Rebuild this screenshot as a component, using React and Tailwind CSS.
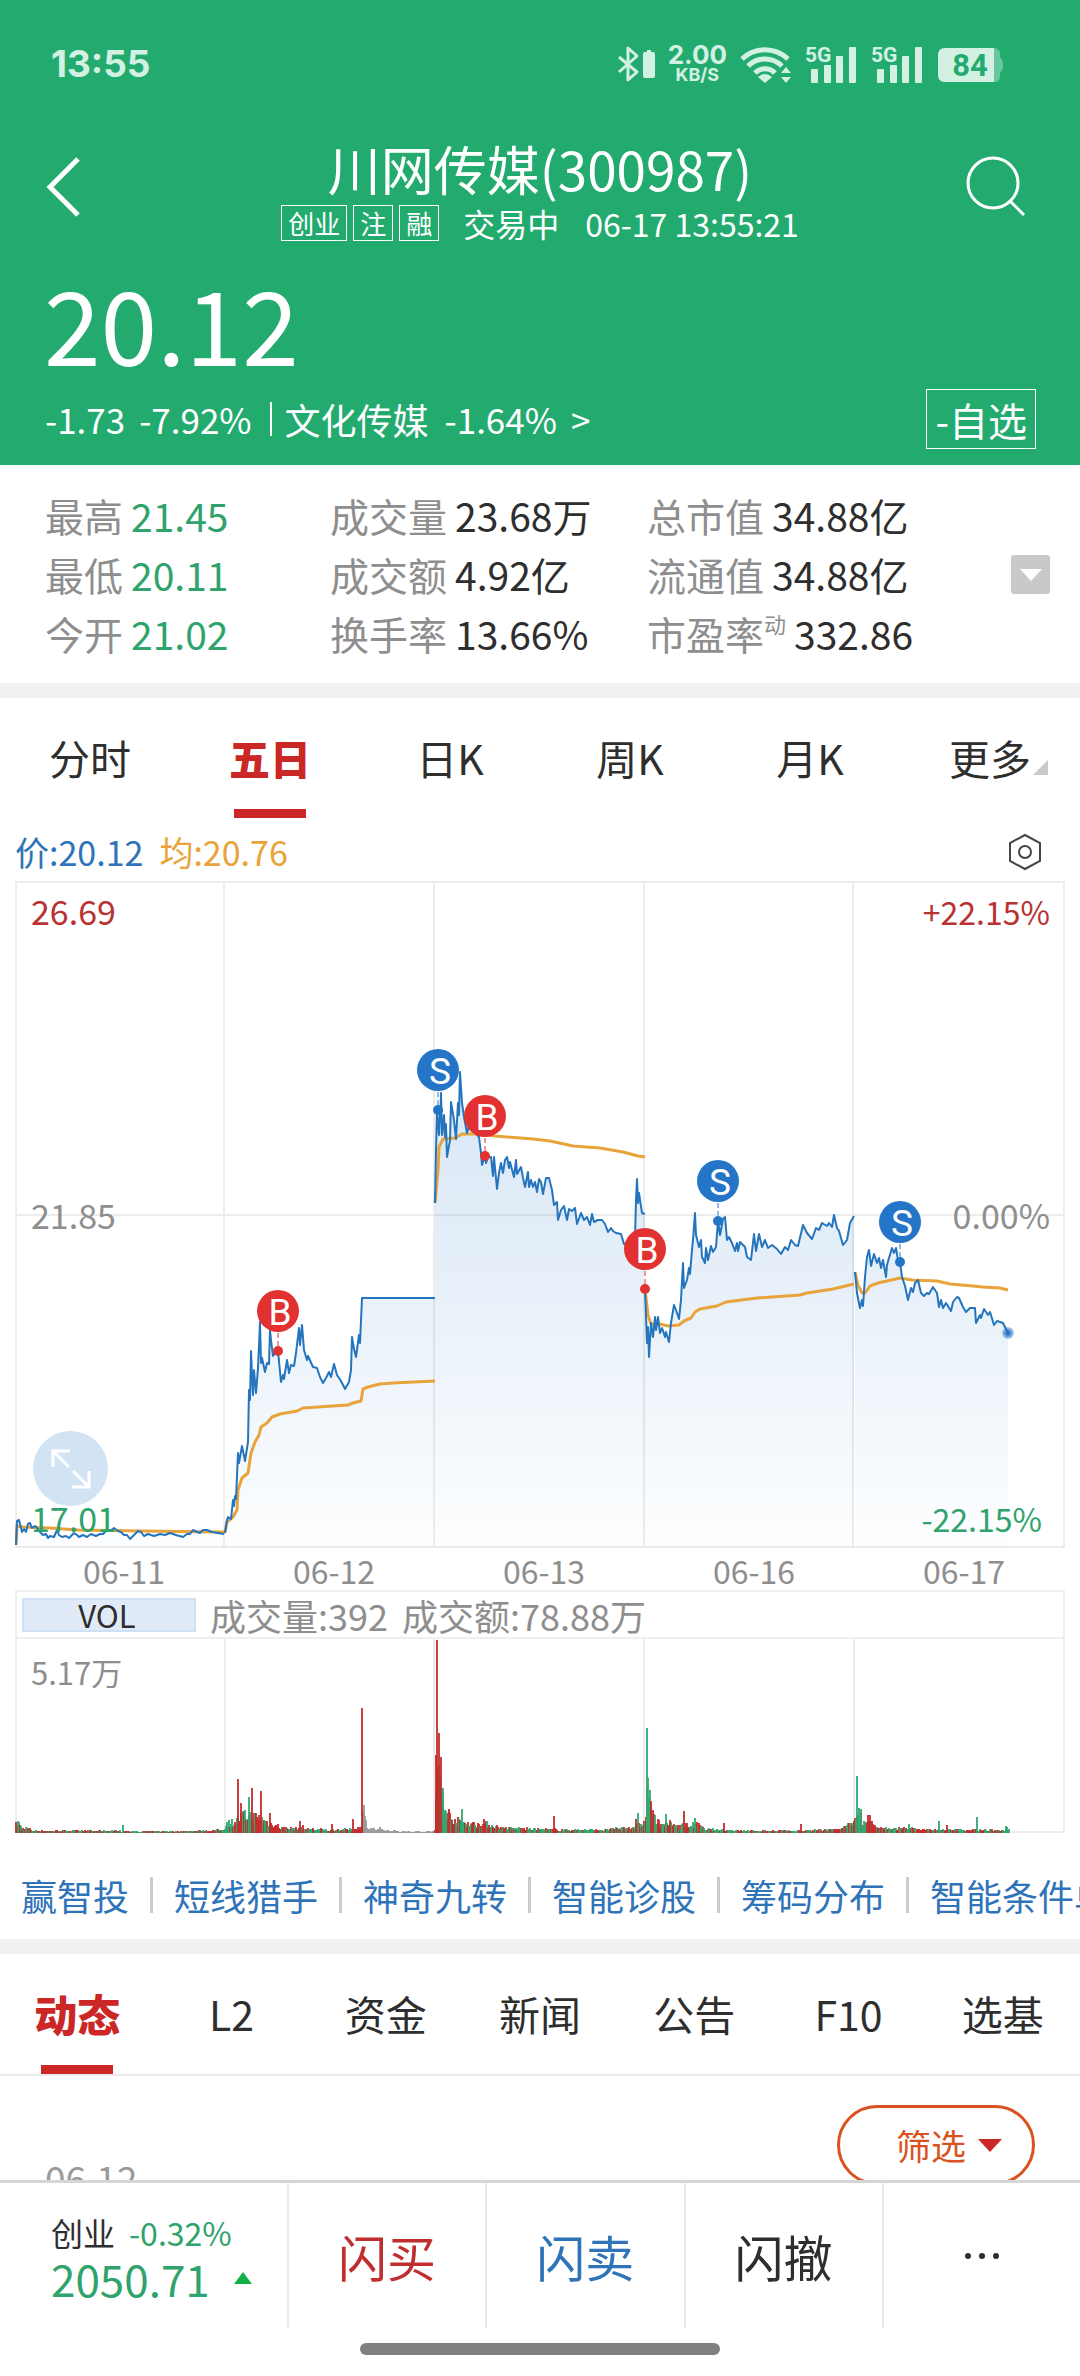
import React from "react";

const stats = [
  [
    { label: "最高", value: "21.45", green: true },
    { label: "最低", value: "20.11", green: true },
    { label: "今开", value: "21.02", green: true },
  ],
  [
    { label: "成交量", value: "23.68万" },
    { label: "成交额", value: "4.92亿" },
    { label: "换手率", value: "13.66%" },
  ],
  [
    { label: "总市值", value: "34.88亿" },
    { label: "流通值", value: "34.88亿" },
    { label: "市盈率", sup: "动", value: "332.86" },
  ],
];

const periods = ["分时", "五日", "日K", "周K", "月K", "更多"];
const dates = ["06-11", "06-12", "06-13", "06-16", "06-17"];
const tools = ["赢智投", "短线猎手", "神奇九转", "智能诊股", "筹码分布", "智能条件单"];
const sections = ["动态", "L2", "资金", "新闻", "公告", "F10", "选基"];

// one entry per trading day, x,y pairs in chart units
const days = [
  {
    price:
      "16,1545 17,1521 19,1520 20,1524 22,1532 24,1529 26,1532 28,1524 30,1523 32,1528 35,1526 38,1529 40,1532 43,1535 46,1534 48,1538 50,1536 54,1537 57,1530 59,1535 62,1537 66,1536 69,1538 72,1535 74,1533 77,1535 79,1537 83,1535 87,1537 91,1534 96,1536 100,1534 103,1534 107,1530 110,1531 114,1528 118,1531 121,1532 124,1535 127,1535 130,1539 134,1535 138,1531 141,1532 144,1536 148,1534 154,1536 160,1534 165,1535 170,1533 176,1535 183,1537 187,1534 190,1534 193,1530 197,1532 200,1533 203,1530 207,1530 212,1532 218,1533 224,1534",
    avg: "16,1545 17,1526 23,1527 50,1528 78,1530 140,1531 225,1532",
  },
  {
    price:
      "225,1533 227,1520 228,1517 231,1519 233,1500 234,1506 235,1496 236,1499 238,1453 239,1463 242,1446 245,1461 248,1442 249,1390 250,1400 251,1351 252,1376 253,1395 254,1370 256,1393 258,1368 260,1322 261,1363 262,1358 265,1372 267,1363 269,1364 270,1330 271,1340 273,1356 276,1352 278,1351 281,1382 283,1375 284,1379 287,1360 289,1373 291,1365 294,1366 296,1353 299,1328 300,1345 302,1325 304,1350 307,1360 308,1356 313,1367 317,1368 320,1377 323,1383 326,1378 329,1372 331,1377 334,1364 337,1375 341,1381 345,1389 349,1382 351,1370 352,1337 354,1349 356,1357 359,1335 360,1343 362,1298 435,1298",
    avg: "225,1532 227,1522 233,1517 237,1510 238,1490 242,1478 248,1473 251,1453 255,1442 259,1435 261,1427 267,1423 272,1417 280,1414 297,1411 303,1408 348,1405 353,1403 361,1401 363,1389 368,1387 380,1384 393,1383 435,1381",
  },
  {
    price:
      "435,1203 436,1150 437,1110 439,1135 441,1093 442,1135 444,1115 445,1137 446,1124 447,1157 450,1140 451,1102 454,1120 456,1139 458,1103 459,1115 460,1072 462,1103 464,1117 467,1133 470,1123 473,1130 479,1137 481,1153 482,1165 485,1156 486,1163 488,1157 491,1157 493,1176 494,1157 497,1189 499,1173 501,1163 503,1173 505,1160 507,1157 509,1168 510,1162 514,1177 516,1160 517,1174 521,1167 523,1178 525,1187 528,1172 529,1187 531,1180 533,1187 535,1182 537,1192 539,1179 541,1182 543,1194 546,1178 549,1178 552,1190 554,1205 557,1202 558,1220 561,1210 564,1206 567,1220 569,1209 572,1211 575,1208 577,1224 581,1213 584,1220 587,1217 590,1225 592,1214 594,1222 598,1220 602,1220 605,1224 608,1232 611,1228 613,1231 616,1233 621,1234 624,1244 630,1248 635,1240 636,1200 637,1179 638,1203 639,1193 642,1213 645,1214",
    avg: "435,1203 438,1170 439,1147 443,1139 455,1138 462,1134 480,1134 495,1136 533,1139 550,1141 573,1146 600,1148 623,1152 638,1156 645,1157",
  },
  {
    price:
      "645,1289 647,1343 648,1327 649,1357 651,1323 653,1337 655,1317 656,1330 658,1317 660,1333 662,1328 665,1337 666,1332 669,1342 671,1323 674,1305 676,1310 679,1319 681,1300 683,1263 684,1288 687,1280 689,1268 690,1274 692,1250 693,1240 695,1213 696,1235 699,1247 701,1240 702,1257 705,1263 706,1248 708,1260 711,1246 713,1252 716,1247 718,1221 720,1235 723,1219 725,1217 727,1240 729,1237 732,1243 735,1251 737,1243 738,1251 740,1242 745,1247 747,1257 751,1260 754,1234 756,1251 759,1234 762,1247 765,1240 768,1248 772,1245 777,1249 781,1254 785,1247 788,1250 791,1240 795,1245 798,1246 803,1225 807,1233 812,1239 816,1228 819,1230 822,1223 827,1226 829,1223 832,1227 834,1215 837,1228 839,1231 843,1245 847,1240 850,1223 854,1216",
    avg: "645,1289 648,1315 651,1324 660,1324 668,1326 679,1325 684,1321 691,1318 695,1312 700,1309 717,1306 726,1302 757,1298 800,1295 807,1293 833,1289 854,1284",
  },
  {
    price:
      "855,1272 857,1293 860,1308 862,1300 863,1306 865,1277 867,1257 869,1250 871,1266 874,1254 877,1263 879,1258 881,1268 883,1260 886,1277 887,1265 889,1258 892,1248 894,1253 896,1248 898,1260 900,1262 902,1277 905,1286 908,1300 911,1288 913,1292 915,1283 918,1280 921,1293 924,1296 927,1293 929,1294 933,1287 937,1293 939,1307 941,1300 943,1308 946,1303 951,1311 953,1302 957,1297 959,1298 963,1307 966,1312 970,1308 975,1308 976,1323 980,1315 981,1318 984,1309 988,1315 990,1312 994,1325 997,1321 1003,1323 1008,1333",
    avg: "855,1272 858,1285 862,1293 865,1293 870,1286 878,1283 900,1278 912,1280 937,1281 950,1284 973,1286 983,1287 1000,1288 1008,1290",
  },
];

const trades = [
  { type: "B", x: 278, y: 1351 },
  { type: "S", x: 438, y: 1110 },
  { type: "B", x: 485, y: 1156 },
  { type: "B", x: 645, y: 1289 },
  { type: "S", x: 718, y: 1221 },
  { type: "S", x: 900, y: 1262 },
];

// [x, typical height] of the minute volume, interpolated between entries
const volumeShape = [
  [15, 12], [17, 16], [21, 6], [26, 7], [32, 3], [60, 3], [116, 3], [130, 2], [200, 3], [222, 4],
  [226, 14], [234, 16], [242, 24], [256, 22], [262, 18], [272, 12], [282, 7], [300, 6], [330, 4],
  [350, 5], [360, 8], [362, 26], [368, 6], [382, 4], [400, 2], [430, 2], [434, 3], [436, 90],
  [440, 62], [443, 34], [450, 22], [458, 16], [474, 12], [486, 12], [500, 7], [540, 5], [600, 4],
  [632, 8], [644, 14], [646, 50], [650, 28], [656, 15], [676, 10], [696, 12], [704, 5], [740, 3],
  [800, 3], [840, 5], [852, 14], [857, 26], [864, 15], [870, 14], [876, 6], [910, 6], [930, 4],
  [980, 4], [1004, 4], [1009, 5],
];

const spikes = [
  [237, 54, "r"], [240, 30, "r"], [248, 36, "g"], [251, 45, "r"], [260, 42, "r"], [269, 20, "r"],
  [299, 12, "r"], [302, 8, "r"], [331, 9, "r"], [122, 8, "g"], [352, 14, "r"], [361, 125, "r"],
  [363, 28, "n"], [379, 6, "n"], [436, 193, "r"], [438, 100, "r"], [440, 76, "r"], [435, 78, "r"],
  [442, 45, "g"], [448, 24, "r"], [461, 24, "g"], [483, 14, "r"], [553, 17, "r"], [637, 20, "g"],
  [635, 14, "r"], [646, 105, "g"], [647, 55, "g"], [649, 43, "g"], [650, 32, "r"], [665, 19, "g"],
  [669, 13, "r"], [683, 22, "r"], [694, 15, "g"], [723, 10, "r"], [800, 9, "r"], [856, 57, "g"],
  [858, 25, "g"], [860, 24, "g"], [867, 18, "r"], [869, 18, "r"], [908, 9, "g"], [938, 12, "g"],
  [946, 8, "r"], [976, 16, "g"], [1005, 7, "g"], [1006, 6, "g"],
];

const barColors = { r: "#c42b2b", g: "#2fa870", n: "#9a9a9a" };

const buildVolume = () => {
  const bars = [];
  let seed = 7;
  const random = () => {
    seed = (seed * 16807) % 2147483647;
    return seed / 2147483647;
  };
  let color = "r";
  let step = 0;
  for (let x = 15; x <= 1008; x++) {
    while (volumeShape[step + 1][0] < x) step++;
    const [x0, h0] = volumeShape[step];
    const [x1, h1] = volumeShape[step + 1];
    const top = h0 + ((h1 - h0) * (x - x0)) / (x1 - x0);
    if (random() > 0.55) color = color === "r" ? "g" : "r";
    const paused = x > 363 && x < 434;
    bars.push([x, Math.max(1, Math.round(top * (0.4 + 0.6 * random()))), paused ? "n" : color]);
  }
  return bars.concat(spikes);
};

const volume = buildVolume();

const Signal = () => (
  <svg viewBox="0 0 53 40" className="h-10 w-[53px]" fill="currentColor">
    <text x="0" y="18" fontSize="21" fontWeight="700" fontFamily="Roboto, sans-serif">
      5G
    </text>
    <rect x="6" y="25" width="7" height="14" rx="1" />
    <rect x="19" y="21" width="7" height="18" rx="1" />
    <rect x="31" y="12" width="7" height="27" rx="1" />
    <rect x="44" y="3" width="7" height="36" rx="1" />
  </svg>
);

const StatusBar = () => (
  <div className="flex h-[127px] items-center justify-between pl-[51px] pr-[76px] text-[#d3f1e3]">
    <span className="font-['Inter','Noto_Sans_CJK_SC',sans-serif] text-[37px] font-bold">13:55</span>
    <div className="flex items-center gap-[13px]">
      <svg viewBox="0 0 38 40" className="h-10 w-[38px]" fill="none" stroke="currentColor" strokeWidth="3">
        <path d="M2 13 20 28 11 36V4l9 8L2 28" strokeLinejoin="round" />
        <path d="M28 8h2V6h4v2h2q2 0 2 2v22q0 2-2 2h-8q-2 0-2-2V10q0-2 2-2Z" fill="currentColor" stroke="none" />
      </svg>
      <div className="flex flex-col items-center font-['Inter',sans-serif] font-bold">
        <span className="text-[26px] leading-[22px]">2.00</span>
        <span className="text-[18px] leading-[18px]">KB/S</span>
      </div>
      <svg viewBox="0 0 52 40" className="h-10 w-[52px]" fill="none" stroke="currentColor" strokeWidth="5">
        <path d="M2 15a33 33 0 0 1 46 0M8 22a24 24 0 0 1 34 0M15 29a14 14 0 0 1 20 0" />
        <path d="M25 39l-7-6q7-6 14 0ZM46 23l5 6H41ZM46 39l5-6H41Z" fill="currentColor" stroke="none" />
      </svg>
      <Signal />
      <Signal />
      <svg viewBox="0 0 67 40" className="h-10 w-[67px]">
        <path d="M55 4h2q6 0 6 6v4q3 1 3 7t-3 7v4q0 6-6 6h-2Z" fill="#69c79e" />
        <path d="M8 4h49v34H8q-7 0-7-7V11q0-7 7-7Z" fill="#d3f1e3" />
        <text x="33" y="32" textAnchor="middle" fontSize="31" fontWeight="700" fontFamily="Roboto, sans-serif" fill="#23ab6f">
          84
        </text>
      </svg>
    </div>
  </div>
);

const Header = () => (
  <header className="bg-[#23ab6f] text-white">
    <StatusBar />
    <div className="flex items-start justify-between px-[46px] pt-[9px]">
      <button type="button" aria-label="返回" className="mt-5 w-[110px]">
        <svg viewBox="0 0 36 62" className="h-[62px] w-9" fill="none" stroke="currentColor" strokeWidth="5">
          <path d="M32 3 4 31l28 28" />
        </svg>
      </button>
      <div className="flex flex-col items-center">
        <h1 className="text-[53px] leading-[64px]">川网传媒(300987)</h1>
        <div className="mt-1 flex items-center text-[32px] leading-[38px]">
          <div className="flex gap-[6px] text-[26px] leading-[34px]">
            <span className="border border-white px-[6px]">创业</span>
            <span className="border border-white px-[6px]">注</span>
            <span className="border border-white px-[6px]">融</span>
          </div>
          <span className="ml-6">交易中</span>
          <span className="ml-[26px]">06-17 13:55:21</span>
        </div>
      </div>
      <button type="button" aria-label="搜索" className="mt-5 flex w-[110px] justify-end pr-2">
        <svg viewBox="0 0 60 62" className="h-[62px] w-[60px]" fill="none" stroke="currentColor" strokeWidth="3">
          <circle cx="27" cy="27" r="25" />
          <path d="M44 45 58 59" />
        </svg>
      </button>
    </div>
    <div className="pl-[44px] pt-[21px] text-[102px] leading-[118px]">20.12</div>
    <div className="flex h-[75px] items-center justify-between pl-[45px] pr-[44px] text-[35px]">
      <div className="flex items-center leading-[44px]">
        <span>-1.73</span>
        <span className="ml-[14px]">-7.92%</span>
        <span className="ml-[18px] mr-[13px] h-[34px] w-[2px] bg-white" />
        <a href="#sector" className="flex">
          <span className="text-[36px]">文化传媒</span>
          <span className="ml-[16px]">-1.64%</span>
          <span className="ml-[14px]">&gt;</span>
        </a>
      </div>
      <button type="button" className="h-[60px] border border-white px-[8px] text-[39px] leading-[56px]">
        -自选
      </button>
    </div>
    <div className="h-[9px]" />
  </header>
);

const Stats = () => (
  <section className="flex items-center bg-white pb-5 pl-[45px] pr-[30px] pt-[21px] text-[39px] leading-[59px]">
    {stats.map((column, i) => (
      <dl key={i} className={i === 0 ? "w-[285px]" : i === 1 ? "w-[317px]" : "flex-1"}>
        {column.map((item) => (
          <div key={item.label} className="flex whitespace-nowrap">
            <dt className="mr-[8px] flex text-[#8e8e8e]">
              {item.label}
              {item.sup && <span className="text-[22px] leading-[38px]">{item.sup}</span>}
            </dt>
            <dd className={item.green ? "text-[#2fa36b]" : "text-[#2e2e2e]"}>{item.value}</dd>
          </div>
        ))}
      </dl>
    ))}
    <button type="button" aria-label="展开" className="flex h-[39px] w-[39px] items-center justify-center rounded-[3px] bg-[#c9c9c9]">
      <svg viewBox="0 0 22 12" className="h-3 w-[22px]" fill="#fff">
        <path d="M0 0h22L11 12Z" />
      </svg>
    </button>
  </section>
);

const PeriodTabs = () => (
  <nav className="grid grid-cols-6 text-[41px] leading-[56px] text-[#2e2e2e]">
    {periods.map((name) => {
      const active = name === "五日";
      return (
        <button key={name} type="button" className="flex flex-col items-center pt-[31px]">
          <span className={active ? "font-black text-[#cc2727]" : "relative"}>
            {name}
            {name === "更多" && (
              <svg viewBox="0 0 15 15" className="absolute -right-[17px] bottom-[10px] h-[15px] w-[15px]" fill="#c9c9c9">
                <path d="M15 0v15H0Z" />
              </svg>
            )}
          </span>
          <span className={`mt-6 h-[9px] w-[72px] ${active ? "bg-[#cc2727]" : ""}`} />
        </button>
      );
    })}
  </nav>
);

const PriceChart = () => (
  <div className="relative">
    <svg viewBox="15 881 1050 668" className="block h-auto w-full" fontFamily="Noto Sans CJK SC, sans-serif" fontSize="34">
      <defs>
        <linearGradient id="area" gradientUnits="userSpaceOnUse" x1="0" y1="1070" x2="0" y2="1547">
          <stop offset="0" stopColor="#2475c8" stopOpacity="0.18" />
          <stop offset="0.5" stopColor="#2475c8" stopOpacity="0.1" />
          <stop offset="1" stopColor="#2475c8" stopOpacity="0.01" />
        </linearGradient>
        <radialGradient id="glow">
          <stop offset="0.2" stopColor="#2475c8" />
          <stop offset="1" stopColor="#2475c8" stopOpacity="0.3" />
        </radialGradient>
      </defs>
      <path
        d="M15 882H1065M15 1215H1065M15 1547H1065M16 882V1547M224 882V1547M434 882V1547M644 882V1547M853 882V1547M1064 882V1547"
        stroke="#ececec"
        strokeWidth="2"
      />
      {days.map(({ price }) => {
        const first = price.split(",")[0];
        const last = price.split(" ").pop().split(",")[0];
        return <polygon key={first} points={`${first},1547 ${price} ${last},1547`} fill="url(#area)" />;
      })}
      {days.map(({ price, avg }) => (
        <g key={price} fill="none" strokeLinejoin="round">
          <polyline points={avg} stroke="#e8a33a" strokeWidth="3" />
          <polyline points={price} stroke="#2475bd" strokeWidth="2" />
        </g>
      ))}
      <circle cx="1008" cy="1333" r="6" fill="url(#glow)" />
      <text x="31" y="925" fill="#b93232">26.69</text>
      <text x="31" y="1229" fill="#8e8e8e">21.85</text>
      <text x="31" y="1532" fill="#2fa36b">17.01</text>
      <text x="1050" y="925" fontSize="32" textAnchor="end" fill="#b93232">+22.15%</text>
      <text x="1050" y="1229" textAnchor="end" fill="#8e8e8e">0.00%</text>
      <text x="1042" y="1532" fontSize="32" textAnchor="end" fill="#2fa36b">-22.15%</text>
      {trades.map(({ type, x, y }) => (
        <g key={x} fill={type === "B" ? "#e23131" : "#2475c8"}>
          <path d={`M${x} ${y - 18}V${y}`} stroke="#fff" strokeWidth="3" />
          <path d={`M${x} ${y - 18}V${y}`} stroke={type === "B" ? "#e23131" : "#2475c8"} strokeDasharray="5 3" />
          <circle cx={x} cy={y} r="5" />
          <circle cx={x} cy={y - 40} r="21" />
          <text x={x + 2} y={y - 26} textAnchor="middle" fill="#fff" fontSize="37" fontFamily="Roboto, sans-serif">
            {type}
          </text>
        </g>
      ))}
    </svg>
    <button
      type="button"
      aria-label="全屏"
      className="absolute bottom-[43px] left-[18px] flex h-[75px] w-[75px] items-center justify-center rounded-full bg-[#d2e4f4]"
    >
      <svg viewBox="0 0 40 40" className="h-10 w-10" fill="none" stroke="#fff" strokeWidth="3">
        <path d="M2 18V2h17M2 2l16 16M38 22v16H21M38 38 22 22" />
      </svg>
    </button>
  </div>
);

const VolumeChart = () => (
  <svg viewBox="15 1638 1050 194" className="block h-auto w-full">
    <path
      d="M15 1831H1065M16 1638V1832M225 1638V1832M434 1638V1832M644 1638V1832M854 1638V1832M1064 1638V1832"
      stroke="#ececec"
      strokeWidth="2"
    />
    {volume.map(([x, height, color], i) => (
      <rect key={i} x={x} y={1832 - height} width="2" height={height} fill={barColors[color]} opacity="0.9" />
    ))}
    <text x="31" y="1684" fontSize="31" fontFamily="Noto Sans CJK SC, sans-serif" fill="#8e8e8e">
      5.17万
    </text>
  </svg>
);

const Chart = () => (
  <section className="px-[15px]">
    <div className="flex h-[63px] items-center gap-4 pt-1 text-[34px] leading-[48px]">
      <span className="text-[#2f73b8]">价:20.12</span>
      <span className="text-[#e8a33a]">均:20.76</span>
      <button type="button" aria-label="设置" className="ml-auto mr-[23px]">
        <svg viewBox="0 0 34 38" className="h-[38px] w-[34px]" fill="none" stroke="#444" strokeWidth="2">
          <path d="M17 2 32 10v18l-15 8-15-8V10Z" />
          <circle cx="17" cy="19" r="6" />
        </svg>
      </button>
    </div>
    <PriceChart />
    <div className="-mr-1 grid h-[41px] grid-cols-5 pl-1 text-center text-[32px] leading-[42px] text-[#8e8e8e]">
      {dates.map((date) => (
        <span key={date}>{date}</span>
      ))}
    </div>
    <div className="flex h-[49px] items-center border-2 border-[#efefef] pl-[5px] text-[36px] leading-[44px] text-[#8e8e8e]">
      <button type="button" className="h-[34px] w-[174px] border-2 border-[#d0e0f5] bg-[#e1eaf7] pr-1 text-[31px] leading-[30px] text-[#2e2e2e]">
        VOL
      </button>
      <span className="ml-[14px]">成交量:392</span>
      <span className="ml-[14px]">成交额:78.88万</span>
    </div>
    <VolumeChart />
  </section>
);

const ToolLinks = () => (
  <nav className="flex h-[106px] items-center gap-[21px] overflow-hidden whitespace-nowrap pb-1 pl-[21px] pt-[22px] text-[36px] leading-[44px] text-[#2f73b8]">
    {tools.map((tool, i) => (
      <React.Fragment key={tool}>
        {i > 0 && <span className="h-9 w-[3px] shrink-0 bg-[#cccccc]" />}
        <a href="#tool" className="shrink-0">{tool}</a>
      </React.Fragment>
    ))}
  </nav>
);

const SectionTabs = () => (
  <nav className="grid grid-cols-7 border-b-2 border-[#ebebeb] text-[41px] leading-[56px] text-[#2e2e2e]">
    {sections.map((name, i) => (
      <button key={name} type="button" className="flex flex-col items-center pt-[31px]">
        <span className={i === 0 ? "text-[43px] font-black text-[#cc2727]" : ""}>{name}</span>
        <span className={`mt-6 h-[9px] w-[72px] ${i === 0 ? "bg-[#cc2727]" : ""}`} />
      </button>
    ))}
  </nav>
);

const Feed = () => (
  <section className="flex min-h-0 flex-1 items-start justify-between overflow-hidden pl-[45px] pr-[45px] pt-[29px]">
    <time className="pt-[46px] text-[37px] leading-[52px] text-[#9a9a9a]">06.12</time>
    <button
      type="button"
      className="flex h-[80px] w-[198px] shrink-0 items-center gap-3 rounded-full border-[3px] border-[#d9531e] pl-[56px] text-[35px] leading-[48px] text-[#d9531e]"
    >
      筛选
      <svg viewBox="0 0 24 13" className="h-[13px] w-6" fill="#cc2727">
        <path d="M0 0h24L12 13Z" />
      </svg>
    </button>
  </section>
);

const BottomBar = () => (
  <footer className="shrink-0 border-t-[3px] border-[#d6d6d6] bg-white">
    <div className="flex h-[145px] text-[49px] text-[#2e2e2e]">
      <a href="#index" className="flex w-[287px] flex-col justify-center pl-[51px]">
        <span className="flex items-center gap-[14px] text-[32px] leading-[44px]">
          创业 <span className="text-[#2fa36b]">-0.32%</span>
        </span>
        <span className="flex items-center gap-6 text-[44px] leading-[48px] text-[#2fa36b]">
          2050.71
          <svg viewBox="0 0 18 12" className="h-3 w-[18px]" fill="#12b048">
            <path d="M9 0l9 12H0Z" />
          </svg>
        </span>
      </a>
      <button type="button" className="flex-1 border-l-2 border-[#ebebeb] text-[#bf2f2f]">闪买</button>
      <button type="button" className="flex-1 border-l-2 border-[#ebebeb] text-[#2f73b8]">闪卖</button>
      <button type="button" className="flex-1 border-l-2 border-[#ebebeb]">闪撤</button>
      <button type="button" aria-label="更多操作" className="flex flex-1 items-center justify-center gap-2 border-l-2 border-[#ebebeb]">
        <span className="h-[6px] w-[6px] rounded-full bg-[#2e2e2e]" />
        <span className="h-[6px] w-[6px] rounded-full bg-[#2e2e2e]" />
        <span className="h-[6px] w-[6px] rounded-full bg-[#2e2e2e]" />
      </button>
    </div>
    <div className="mx-auto mb-[21px] mt-[15px] h-3 w-1/3 rounded-full bg-[#808080]" />
  </footer>
);

const App = () => {
  return (
    <div className="flex h-screen flex-col overflow-hidden bg-white font-['Noto_Sans_CJK_SC',sans-serif]">
      <Header />
      <Stats />
      <div className="h-[15px] shrink-0 bg-[#f1f1f1]" />
      <PeriodTabs />
      <Chart />
      <ToolLinks />
      <div className="h-[15px] shrink-0 bg-[#f1f1f1]" />
      <SectionTabs />
      <Feed />
      <BottomBar />
    </div>
  );
};

export default App;
